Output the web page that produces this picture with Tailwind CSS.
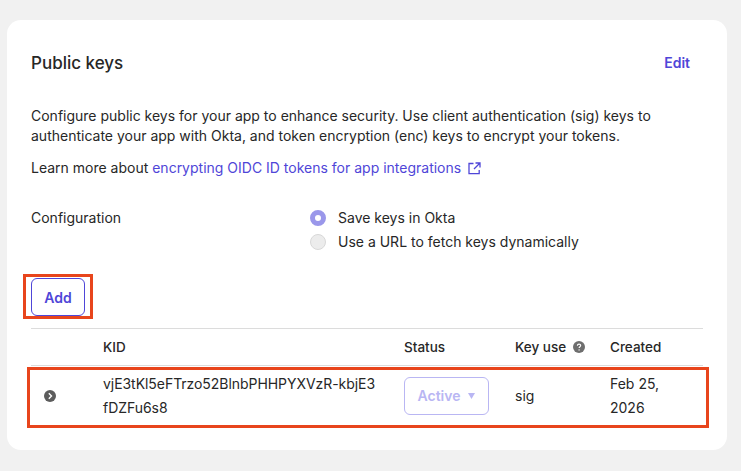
<!DOCTYPE html>
<html lang="en">
  <head>
    <meta charset="UTF-8" />
    <script src="https://cdn.jsdelivr.net/npm/@tailwindcss/browser@4"></script>
    <title>Public keys</title>
  </head>
  <body class="bg-[#f1f1f1] font-['Inter',sans-serif] text-[14px] text-[#272727]">
    <div class="h-[471px] w-[741px] overflow-hidden pl-[7px] pt-[20px]">
      <div class="relative h-[430px] w-[720px] rounded-[14px] bg-white pl-[24px] pr-[24px]">
        <div class="flex items-center justify-between pt-[31px] pr-[13px]">
          <h2 class="text-[17px] leading-[24px] font-[550] text-[#272727]">Public keys</h2>
          <button class="text-[14px] leading-[24px] font-semibold text-[#4f46d8]" type="button">Edit</button>
        </div>

        <p class="mt-[31px] text-[14px] leading-[20px]">Configure public keys for your app to enhance security. Use client authentication (sig) keys to<br />authenticate your app with Okta, and token encryption (enc) keys to encrypt your tokens.</p>
        <p class="mt-[12px] flex items-center text-[14px] leading-[20px]">
          <span class="whitespace-pre">Learn more about </span>
          <a class="text-[#4f46d8]">encrypting OIDC ID tokens for app integrations</a>
          <svg class="ml-[7px]" width="13" height="13" viewBox="0 0 13 13" fill="none" stroke="#4f46d8" stroke-width="1.3">
            <path d="M5.5 1.5H1v10.2h10.2V8" />
            <path d="M7.5 1h4.5v4.5M12 1L6 7" />
          </svg>
        </p>

        <div class="mt-[30px] flex">
          <div class="w-[279px] text-[14px] leading-[20px]">Configuration</div>
          <div class="flex flex-col gap-[4px] text-[14px] leading-[20px]">
            <label class="flex items-center gap-[12px]">
              <span class="h-[16px] w-[16px] rounded-full border-[5px] border-[#9a97ea] bg-white"></span>
              Save keys in Okta
            </label>
            <label class="flex items-center gap-[12px]">
              <span class="h-[16px] w-[16px] rounded-full border border-[#d8d8d8] bg-[#ececec]"></span>
              Use a URL to fetch keys dynamically
            </label>
          </div>
        </div>

        <button class="mt-[26px] block h-[38px] w-[54px] rounded-[6px] border border-[#4f46d8] text-[14px] font-semibold text-[#4f46d8]" type="button">Add</button>

        <table class="mt-[12px] w-[672px] table-fixed border-collapse text-left">
          <thead>
            <tr class="h-[37px] border-t border-b border-[#dcdcdc]">
              <th class="w-[72px]"></th>
              <th class="w-[301px] text-[13.5px] font-medium">KID</th>
              <th class="w-[111px] text-[13.5px] font-medium">Status</th>
              <th class="w-[95px] text-[13.5px] font-medium">
                <span class="flex items-center gap-[7px]">
                  Key use
                  <svg width="12" height="12" viewBox="0 0 12 12">
                    <circle cx="6" cy="6" r="6" fill="#6e6e6e" />
                    <path d="M4.4 4.7c0-2.1 3.3-2.1 3.3-.1 0 1.2-1.6 1.2-1.6 2.5" fill="none" stroke="#fff" stroke-width="1.1" />
                    <circle cx="6.1" cy="8.9" r=".7" fill="#fff" />
                  </svg>
                </span>
              </th>
              <th class="text-[13.5px] font-medium">Created</th>
            </tr>
          </thead>
          <tbody>
            <tr class="h-[60px]">
              <td class="pl-[13px]">
                <svg class="block" width="12" height="12" viewBox="0 0 12 12">
                  <circle cx="6" cy="6" r="6" fill="#5c5c5c" />
                  <path d="M4.8 3.3L7.5 6L4.8 8.7" fill="none" stroke="#fff" stroke-width="1.4" />
                </svg>
              </td>
              <td class="text-[14px] leading-[24px] tracking-[-0.05px] break-all">vjE3tKl5eFTrzo52BlnbPHHPYXVzR-kbjE3<br />fDZFu6s8</td>
              <td>
                <div class="flex h-[38px] w-[85px] items-center justify-center gap-[8px] rounded-[6px] border border-[#b9b6f3] text-[14px] font-semibold text-[#b9b6f3]">
                  Active
                  <svg width="7" height="7" viewBox="0 0 7 7"><path d="M0 1h7L3.5 7z" fill="#b9b6f3" /></svg>
                </div>
              </td>
              <td class="text-[14px]">sig</td>
              <td class="text-[14px] leading-[24px]">Feb 25,<br />2026</td>
            </tr>
          </tbody>
        </table>

        <div class="absolute left-[16px] top-[254px] h-[45px] w-[70px] border-[3px] border-[#e8451c]"></div>
        <div class="absolute left-[20px] top-[347px] h-[61px] w-[682px] border-[3px] border-[#e8451c]"></div>
      </div>
    </div>
  </body>
</html>
